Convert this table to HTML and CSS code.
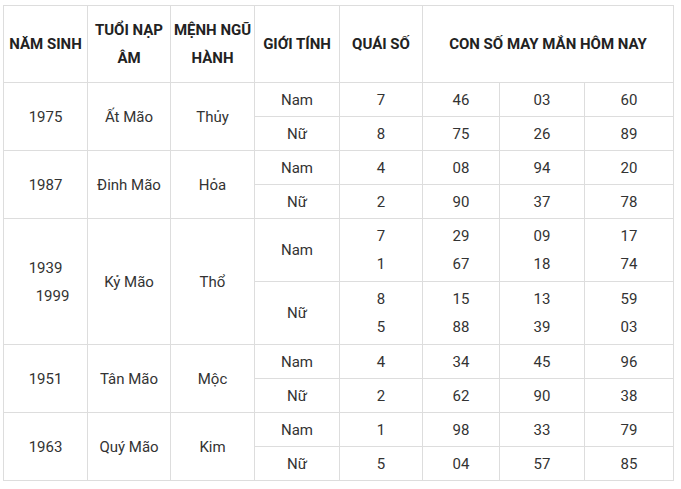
FILE: index.html
```html
<!DOCTYPE html>
<html lang="vi">
<head>
<meta charset="utf-8">
<title>Con số may mắn</title>
<link rel="stylesheet" href="styles.css">
</head>
<body>
<table class="lucky">
  <colgroup>
    <col class="c1"><col class="c2"><col class="c3"><col class="c4"><col class="c5"><col class="c6"><col class="c7"><col class="c8">
  </colgroup>
  <thead>
    <tr class="head">
      <th>NĂM SINH</th>
      <th>TUỔI NẠP ÂM</th>
      <th>MỆNH NGŨ HÀNH</th>
      <th>GIỚI TÍNH</th>
      <th>QUÁI SỐ</th>
      <th colspan="3">CON SỐ MAY MẮN HÔM NAY</th>
    </tr>
  </thead>
  <tbody>
    <tr class="r">
      <td rowspan="2">1975</td><td rowspan="2">Ất Mão</td><td rowspan="2">Thủy</td>
      <td>Nam</td><td>7</td><td>46</td><td>03</td><td>60</td>
    </tr>
    <tr class="r">
      <td>Nữ</td><td>8</td><td>75</td><td>26</td><td>89</td>
    </tr>
    <tr class="r">
      <td rowspan="2">1987</td><td rowspan="2">Đinh Mão</td><td rowspan="2">Hỏa</td>
      <td>Nam</td><td>4</td><td>08</td><td>94</td><td>20</td>
    </tr>
    <tr class="r">
      <td>Nữ</td><td>2</td><td>90</td><td>37</td><td>78</td>
    </tr>
    <tr class="tall">
      <td rowspan="2">1939<br><span class="indent">1999</span></td><td rowspan="2">Kỷ Mão</td><td rowspan="2">Thổ</td>
      <td>Nam</td><td>7<br>1</td><td>29<br>67</td><td>09<br>18</td><td>17<br>74</td>
    </tr>
    <tr class="tall">
      <td>Nữ</td><td>8<br>5</td><td>15<br>88</td><td>13<br>39</td><td>59<br>03</td>
    </tr>
    <tr class="r">
      <td rowspan="2">1951</td><td rowspan="2">Tân Mão</td><td rowspan="2">Mộc</td>
      <td>Nam</td><td>4</td><td>34</td><td>45</td><td>96</td>
    </tr>
    <tr class="r">
      <td>Nữ</td><td>2</td><td>62</td><td>90</td><td>38</td>
    </tr>
    <tr class="r">
      <td rowspan="2">1963</td><td rowspan="2">Quý Mão</td><td rowspan="2">Kim</td>
      <td>Nam</td><td>1</td><td>98</td><td>33</td><td>79</td>
    </tr>
    <tr class="r">
      <td>Nữ</td><td>5</td><td>04</td><td>57</td><td>85</td>
    </tr>
  </tbody>
</table>
</body>
</html>
```
FILE: styles.css
```css
html, body {
  margin: 0;
  padding: 0;
  background: #ffffff;
}
body {
  padding: 5px 0 0 3px;
  font-family: Roboto, "Liberation Sans", Arial, sans-serif;
}
.lucky {
  border-collapse: collapse;
  table-layout: fixed;
  width: 670px;
  font-size: 15px;
  line-height: 28px;
  color: #333333;
}
.c1 { width: 84px; }
.c2 { width: 83px; }
.c3 { width: 84px; }
.c4 { width: 85px; }
.c5 { width: 83px; }
.c6 { width: 77px; }
.c7 { width: 85px; }
.c8 { width: 89px; }
.lucky th,
.lucky td {
  border: 1px solid #dddddd;
  padding: 0 1px;
  text-align: center;
  vertical-align: middle;
}
.lucky th {
  font-weight: 700;
  color: #222222;
}
.head { height: 77px; }
.r { height: 34px; }
.tall { height: 63px; }
.indent {
  padding-left: 14px;
}
```
